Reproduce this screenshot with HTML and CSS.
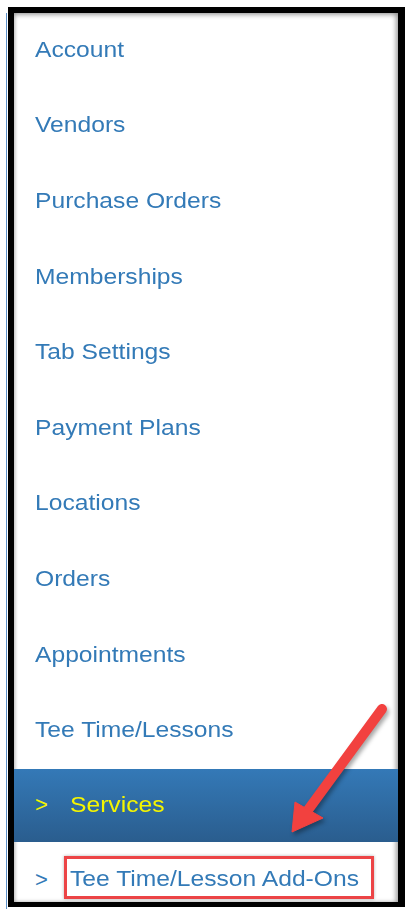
FILE: index.html
```html
<!DOCTYPE html>
<html lang="en">
<head>
    <meta charset="UTF-8">
    <meta name="viewport" content="width=device-width, initial-scale=1.0">
    <title>Settings Menu</title>
    <link rel="stylesheet" href="styles.css">
</head>
<body>

    <div class="page">
        <div class="edge"></div>
        <div class="frame">
            <ul class="menu">
                <li class="item"><a href="#" class="label">Account</a></li>
                <li class="item"><a href="#" class="label">Vendors</a></li>
                <li class="item"><a href="#" class="label">Purchase Orders</a></li>
                <li class="item"><a href="#" class="label">Memberships</a></li>
                <li class="item"><a href="#" class="label">Tab Settings</a></li>
                <li class="item"><a href="#" class="label">Payment Plans</a></li>
                <li class="item"><a href="#" class="label">Locations</a></li>
                <li class="item"><a href="#" class="label">Orders</a></li>
                <li class="item"><a href="#" class="label">Appointments</a></li>
                <li class="item"><a href="#" class="label">Tee Time/Lessons</a></li>
                <li class="item active"><span class="caret">&gt;</span><a href="#" class="label">Services</a></li>
                <li class="item sub"><span class="caret">&gt;</span><span class="marked"><a href="#" class="label">Tee Time/Lesson Add-Ons</a></span></li>
            </ul>
        </div>

        <svg class="arrow" width="405" height="909" viewBox="0 0 405 909">
            <g fill="#f2413f" stroke="#f2413f">
                <line x1="382" y1="709" x2="308" y2="810" stroke-width="10" stroke-linecap="round"/>
                <polygon points="292,832 295,802 323,818" stroke-width="1" stroke-linejoin="round"/>
            </g>
        </svg>
    </div>

</body>
</html>
```

FILE: styles.css
```css
body {
    margin: 0;
    background: #fff;
    font-family: "Liberation Sans", Arial, sans-serif;
}
.page {
    position: relative;
    display: flex;
    padding-top: 7px;
    height: 902px;
}
.edge {
    width: 1px;
    margin: 6px 1px 0 6px;
    background: #5b8fc7;
}
.frame {
    width: 384px;
    height: 889px;
    border-style: solid;
    border-color: #000;
    border-width: 6px 7px 5px 6px;
    background: #fff;
    box-shadow: inset 0 3px 4px rgba(0, 0, 0, 0.2), inset -3px 0 4px rgba(0, 0, 0, 0.25), inset 2px 0 3px rgba(0, 0, 0, 0.12);
    overflow: hidden;
}
.menu {
    list-style: none;
    margin: 0;
    padding: 0;
}
.item {
    display: flex;
    align-items: center;
    height: 75.6px;
    padding: 0 0 2px 21px;
    box-sizing: border-box;
    font-size: 22px;
}
.label {
    display: inline-block;
    color: #337ab7;
    text-decoration: none;
    transform: scaleX(1.12);
    transform-origin: left center;
}
.caret {
    width: 35px;
    color: #337ab7;
}
.active {
    height: 73px;
    padding-bottom: 0;
    background: linear-gradient(#3479b7, #2a5d8e);
}
.active .label,
.active .caret {
    color: #f5f500;
}
.sub {
    height: 60px;
    padding-top: 13px;
}
.sub .caret {
    padding-top: 6px;
}
.marked {
    margin-left: -6px;
    padding: 7px 43px 4px 3px;
    border: 3px solid #ec4446;
    box-shadow: 0 0 3px rgba(0, 0, 0, 0.3);
}
.arrow {
    position: absolute;
    top: 0;
    left: 0;
    pointer-events: none;
    filter: drop-shadow(2px 3px 2px rgba(0, 0, 0, 0.35));
}
```
